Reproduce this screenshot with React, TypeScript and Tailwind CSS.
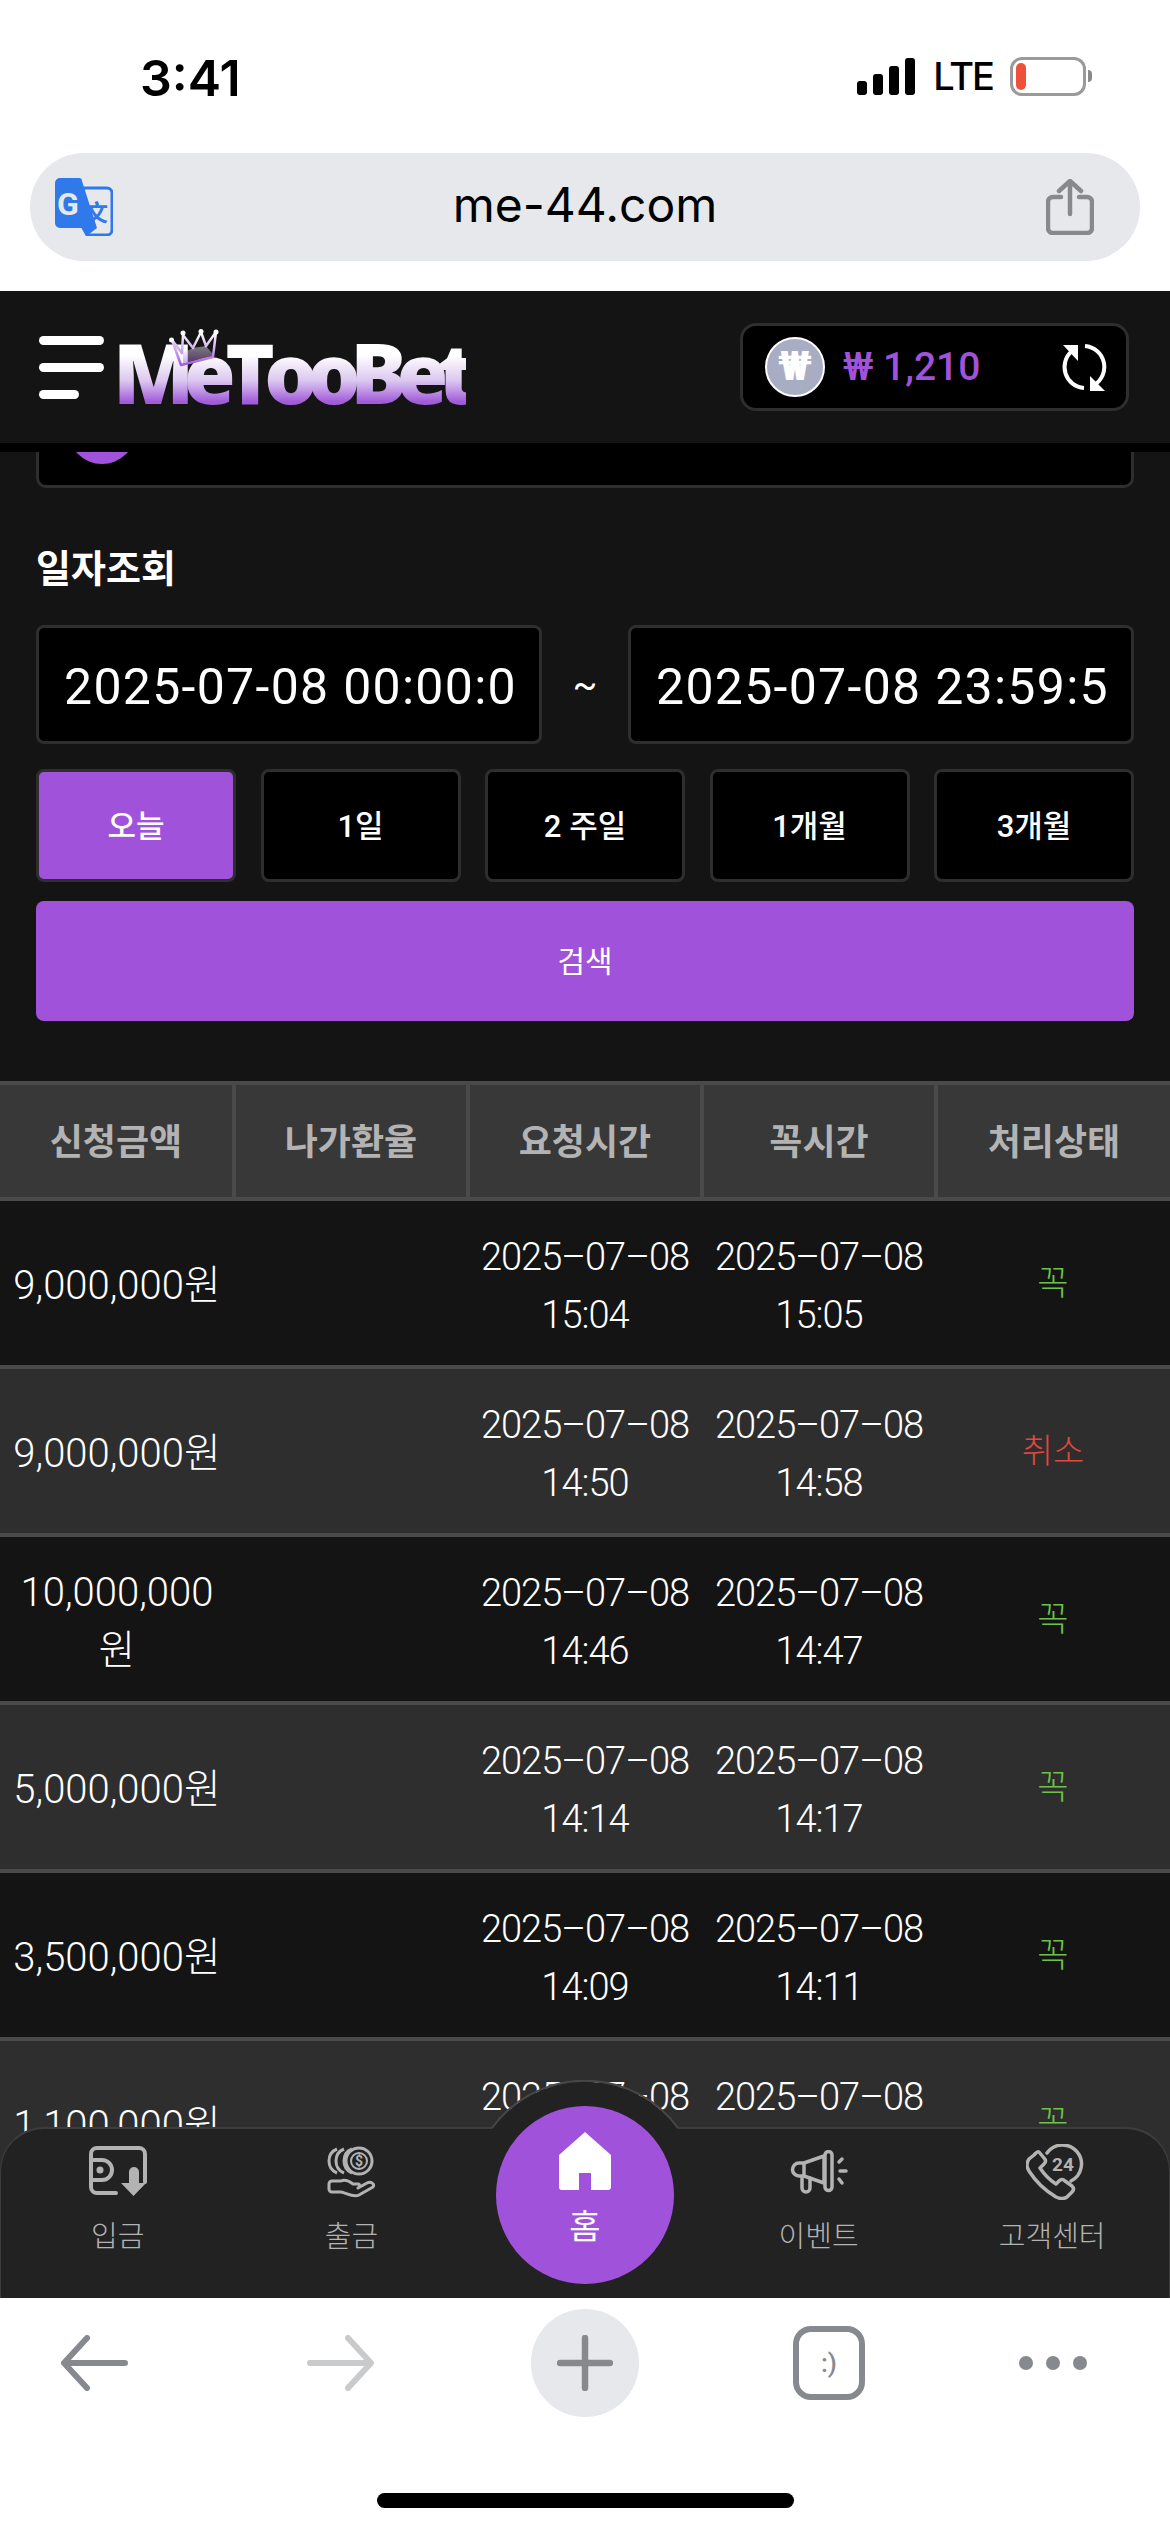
const COLS = 'grid grid-cols-[236px_234px_234px_234px_232px]'

const HEADERS = ['신청금액', '나가환율', '요청시간', '꼭시간', '처리상태']

const ROWS = [
  { amount: '9,000,000원', req: '15:04', done: '15:05', status: '꼭' },
  { amount: '9,000,000원', req: '14:50', done: '14:58', status: '취소' },
  { amount: '10,000,000\n원', req: '14:46', done: '14:47', status: '꼭' },
  { amount: '5,000,000원', req: '14:14', done: '14:17', status: '꼭' },
  { amount: '3,500,000원', req: '14:09', done: '14:11', status: '꼭' },
  { amount: '1,100,000원', req: '14:02', done: '14:03', status: '꼭' },
]

const RANGES = ['오늘', '1일', '2 주일', '1개월', '3개월']

function TranslateIcon() {
  return (
    <svg width="58" height="58" viewBox="0 0 58 58">
      <path d="M28 10 H52 a5 5 0 0 1 5 5 V52 a5 5 0 0 1 -5 5 H32 L27 48 Z" fill="#e7e8ec" stroke="#3079ea" strokeWidth="3" />
      <path d="M5 0 H24 a3 3 0 0 1 3 3 L42 50 H5 a5 5 0 0 1 -5 -5 V5 a5 5 0 0 1 5 -5 Z" fill="#3079ea" />
      <path d="M27 50 H42 L33 57 Z" fill="#3079ea" />
      <text x="2" y="37" fontSize="32" fontWeight="700" fill="#e7e8ec" fontFamily="Roboto">G</text>
      <text x="30" y="43" fontSize="23" fontWeight="700" fill="#3079ea" fontFamily="Noto Sans CJK SC">文</text>
    </svg>
  )
}

function ShareIcon() {
  return (
    <svg width="48" height="56" viewBox="0 0 48 56" fill="none" stroke="#868a8e" strokeWidth="4.5" strokeLinecap="round" strokeLinejoin="round">
      <path d="M15 18 H7 a5 5 0 0 0 -5 5 V49 a5 5 0 0 0 5 5 H41 a5 5 0 0 0 5 -5 V23 a5 5 0 0 0 -5 -5 H33" />
      <path d="M24 35 V3 M13 12 L24 2 L35 12" />
    </svg>
  )
}

function RefreshIcon() {
  return (
    <svg width="47" height="47" viewBox="0 0 47 47" fill="none">
      <path d="M12 7 A21 21 0 0 0 24 44" stroke="#fff" strokeWidth="4" />
      <path d="M25 2 A21 21 0 0 1 34 41" stroke="#fff" strokeWidth="4" />
      <path d="M3 1 H18 V17 Z" fill="#fff" />
      <path d="M30 32 V47 H45 Z" fill="#fff" />
    </svg>
  )
}

function Crown() {
  return (
    <svg width="50" height="38" viewBox="0 0 50 38" className="absolute left-[56px] -top-[1px]">
      <defs>
        <linearGradient id="crown" x1="0" y1="0" x2="0" y2="1">
          <stop offset="0" stopColor="#ffffff" />
          <stop offset="1" stopColor="#a35cd9" />
        </linearGradient>
      </defs>
      <path d="M3 11 L13 24 L14 6 L24 19 L32 3 L37 17 L47 3 L44 28 L12 36 Z" fill="none" stroke="url(#crown)" strokeWidth="2.5" strokeLinejoin="round" />
      <path d="M14 24 L24 19 L37 17 L43 24 L43 27 L14 34 Z" fill="url(#crown)" opacity="0.45" />
      <circle cx="2.5" cy="11" r="2.5" fill="#fff" />
      <circle cx="14" cy="4" r="2.5" fill="#fff" />
      <circle cx="32" cy="2.5" r="2.5" fill="#fff" />
      <circle cx="47" cy="3" r="2.5" fill="#fff" />
    </svg>
  )
}

function WalletIcon() {
  return (
    <svg width="58" height="52" viewBox="0 0 58 52" fill="none" stroke="#b3b3b3" strokeWidth="4" strokeLinecap="round">
      <path d="M27 47 H8 a6 6 0 0 1 -6 -6 V8 a6 6 0 0 1 6 -6 H50 a6 6 0 0 1 6 6 V36" />
      <path d="M2 14 H13 a10 10 0 0 1 0 20 H2" />
      <circle cx="11" cy="24" r="3.5" fill="#b3b3b3" stroke="none" />
      <path d="M40 26 a5 5 0 0 1 10 0 V37 H57 L44.5 50 L32 37 H40 Z" fill="#b3b3b3" stroke="none" />
    </svg>
  )
}

function CoinsIcon() {
  return (
    <svg width="50" height="52" viewBox="0 0 50 52" fill="none" stroke="#b3b3b3" strokeWidth="3">
      <circle cx="33" cy="15" r="13" />
      <path d="M26 3 A13 13 0 0 0 26 27 M18 3 A13 13 0 0 0 18 27 M11 3 A13 13 0 0 0 11 27" />
      <circle cx="33" cy="15" r="8" strokeWidth="2" />
      <text x="33" y="20" textAnchor="middle" fontSize="14" fontWeight="700" fill="#b3b3b3" stroke="none" fontFamily="Roboto">$</text>
      <path d="M6 35 H15 C19 33 23 35 27 38 H32 C34 38 34 41 32 42 L41 37 C45 35 49 38 47 41 L33 49 C27 52 21 47 15 46 H6 a3 3 0 0 1 -3 -3 V38 a3 3 0 0 1 3 -3 Z" strokeLinejoin="round" />
    </svg>
  )
}

function MegaphoneIcon() {
  return (
    <svg width="58" height="44" viewBox="0 0 58 44" fill="none" stroke="#b3b3b3" strokeWidth="3.5" strokeLinecap="round" strokeLinejoin="round">
      <path d="M14 13 L34 6 V33 L14 26 H9 a6.5 6.5 0 0 1 0 -13 Z" />
      <path d="M14 13 V26" />
      <rect x="35" y="1.5" width="7" height="39" rx="3.5" />
      <path d="M12 27 V38 a4 4 0 0 0 8 0 V28" />
      <path d="M49 12 L52 9 M50 21 H56 M49 29 L52 33" />
    </svg>
  )
}

function PhoneIcon() {
  return (
    <svg width="58" height="56" viewBox="0 0 58 56" fill="none" stroke="#b3b3b3" strokeWidth="3.5" strokeLinejoin="round" strokeLinecap="round" className="ml-[5px]">
      <path d="M21 9 A19 19 0 1 1 45 37" />
      <path d="M8 11 L3 15 C0 19 1 24 3 27 C10 38 20 47 30 53 C34 55 38 55 41 53 L46 48 C48 46 48 44 46 42 L39 37 C37 35 35 35 33 37 L30 40 C22 35 18 30 14 24 L18 20 C20 18 20 16 18 14 L13 8 C11 7 10 9 8 11 Z" />
      <text x="37" y="27" textAnchor="middle" fontSize="19" fontWeight="700" fill="#b3b3b3" stroke="none" fontFamily="Roboto">24</text>
    </svg>
  )
}

function HomeIcon() {
  return (
    <svg width="52" height="58" viewBox="0 0 52 58">
      <path d="M26 0 L52 23 V55 a3 3 0 0 1 -3 3 H32 V41 H20 V58 H3 a3 3 0 0 1 -3 -3 V23 Z" fill="#fff" />
    </svg>
  )
}

function NavItem({ label, children }: { label: string; children: React.ReactNode }) {
  return (
    <div className="flex flex-col items-center">
      <div className="h-[56px] flex items-center">{children}</div>
      <span className="mt-[17px] text-[29px] leading-[40px] font-light text-[#b3b3b3]">{label}</span>
    </div>
  )
}

function BottomNav() {
  return (
    <div className="absolute left-0 right-0 bottom-0 h-[171px]">
      {/* bump behind the home button */}
      <svg width="190" height="50" viewBox="0 0 190 50" className="absolute left-[490px] -top-[47px]">
        <path d="M2 49 A115 115 0 0 1 188 49 Z" fill="#222222" />
        <path d="M2 48 A115 115 0 0 1 188 48" fill="none" stroke="#474747" strokeWidth="2" />
      </svg>
      <div className="h-full rounded-t-[44px] bg-[#222222] border-t-2 border-x border-t-[#3d3d3d] border-x-[#3d3d3d] grid grid-cols-5 pt-[15px]">
        <NavItem label="입금"><WalletIcon /></NavItem>
        <NavItem label="출금"><CoinsIcon /></NavItem>
        <div />
        <NavItem label="이벤트"><MegaphoneIcon /></NavItem>
        <NavItem label="고객센터"><PhoneIcon /></NavItem>
      </div>
      <div className="absolute left-[496px] -top-[21px] w-[178px] h-[178px] rounded-full bg-[#a152da] flex flex-col items-center pt-[26px]">
        <HomeIcon />
        <span className="mt-[17px] text-[34px] leading-[40px] text-white">홈</span>
      </div>
    </div>
  )
}

function BrowserToolbar() {
  return (
    <div className="h-[234px] bg-white flex flex-col">
      <div className="flex items-center h-[119px] pt-[11px] pl-[41px]">
        <div className="w-[108px] flex justify-center">
          <svg width="68" height="56" viewBox="0 0 68 56" fill="none" stroke="#868a8e" strokeWidth="6" strokeLinecap="round" strokeLinejoin="round">
            <path d="M64 28 H4 M26 3 L3 28 L26 53" />
          </svg>
        </div>
        <div className="ml-[137px] w-[108px] flex justify-center">
          <svg width="68" height="56" viewBox="0 0 68 56" fill="none" stroke="#c9cacc" strokeWidth="6" strokeLinecap="round" strokeLinejoin="round">
            <path d="M4 28 H64 M42 3 L65 28 L42 53" />
          </svg>
        </div>
        <div className="ml-[137px] w-[108px] h-[108px] rounded-full bg-[#e7e8ec] flex items-center justify-center">
          <svg width="56" height="56" viewBox="0 0 56 56" fill="none" stroke="#868a8e" strokeWidth="6.5" strokeLinecap="round">
            <path d="M28 3 V53 M3 28 H53" />
          </svg>
        </div>
        <div className="ml-[154px] w-[72px] h-[74px] rounded-[18px] border-[6px] border-[#868a8e] flex items-center justify-center">
          <span className="text-[26px] leading-none font-medium text-[#868a8e]">:)</span>
        </div>
        <div className="ml-[154px] flex gap-[13px]">
          <span className="w-[14px] h-[14px] rounded-full bg-[#868a8e]" />
          <span className="w-[14px] h-[14px] rounded-full bg-[#868a8e]" />
          <span className="w-[14px] h-[14px] rounded-full bg-[#868a8e]" />
        </div>
      </div>
      <div className="mt-[76px] mx-auto w-[417px] h-[15px] rounded-full bg-black" />
    </div>
  )
}

export default function App() {
  return (
    <div className="w-[1170px] h-[2532px] overflow-hidden flex flex-col bg-white font-['Roboto','Noto_Sans_CJK_KR',sans-serif]">
      {/* status bar */}
      <div className="h-[153px] flex items-start pt-[52px]">
        <span className="ml-[140px] font-['Inter'] text-[50px] leading-[52px] font-semibold text-black">3:41</span>
        <div className="ml-auto mr-[78px] flex items-center h-[40px] mt-[4px]">
          <div className="flex items-end gap-[6px] h-[38px]">
            <span className="w-[10px] h-[14px] rounded-[3px] bg-black" />
            <span className="w-[10px] h-[21px] rounded-[3px] bg-black" />
            <span className="w-[10px] h-[29px] rounded-[3px] bg-black" />
            <span className="w-[10px] h-[37px] rounded-[3px] bg-black" />
          </div>
          <span className="ml-[18px] font-['Inter'] text-[38px] leading-[40px] font-medium tracking-[-2px] text-black">LTE</span>
          <div className="ml-[17px] w-[76px] h-[39px] rounded-[12px] border-[3px] border-[#9a9a9a] p-[3px]">
            <div className="w-[10px] h-full rounded-[5px] bg-[#ef5039]" />
          </div>
          <span className="ml-[2px] w-[4px] h-[12px] rounded-r-full bg-[#8a8a8a]" />
        </div>
      </div>

      {/* address bar */}
      <div className="h-[138px]">
        <div className="mx-[30px] h-[108px] rounded-full bg-[#e7e8ec] flex items-center pl-[25px] pr-[46px]">
          <TranslateIcon />
          <span className="flex-1 text-center font-['Inter'] text-[48px] leading-[56px] text-black ml-[11px] -mt-[5px]">me-44.com</span>
          <ShareIcon />
        </div>
      </div>

      {/* web view */}
      <div className="relative flex-1 overflow-hidden bg-[#141414]">
        <header className="h-[161px] border-b-[9px] border-black flex items-start pl-[39px] pr-[41px]">
          <div className="mt-[45px] w-[65px] flex flex-col gap-[18px]">
            <span className="h-[9px] rounded-full bg-white" />
            <span className="h-[9px] rounded-full bg-white" />
            <span className="h-[9px] w-[40px] rounded-full bg-white" />
          </div>
          <div className="relative ml-[9px] mt-[39px]">
            <Crown />
            <span className="block font-['Open_Sans'] text-[84px] leading-[84px] font-extrabold tracking-[-10.5px] bg-linear-to-b from-white from-30% via-[#dcc8f0] via-60% to-[#a35cd9] to-85% bg-clip-text text-transparent">MeTooBet</span>
          </div>
          <div className="ml-auto mt-[32px] w-[389px] h-[88px] rounded-[16px] border-[3px] border-[#2e2e2e] bg-black flex items-center pl-[22px] pr-[19px]">
            <div className="w-[60px] h-[60px] rounded-full bg-[#a9adc4] border-2 border-white flex items-center justify-center text-[40px] font-black text-white">₩</div>
            <span className="ml-[18px] text-[39px] leading-none font-medium text-[#a152da]">₩ 1,210</span>
            <div className="ml-auto flex"><RefreshIcon /></div>
          </div>
        </header>

        <main className="px-[36px]">
          <div className="h-[36px] overflow-hidden bg-black border-x-[3px] border-b-[3px] border-[#2e2e2e] rounded-b-[10px] pl-[29px]">
            <div className="-mt-[56px] w-[68px] h-[68px] rounded-full bg-[#a152da]" />
          </div>

          <h2 className="mt-[54px] h-[50px] text-[38px] leading-[50px] pt-[2px] font-semibold text-white">일자조회</h2>

          <div className="mt-[33px] flex items-center">
            <input readOnly value="2025-07-08 00:00:00" className="w-[506px] h-[119px] rounded-[8px] border-[3px] border-[#2e2e2e] bg-black pl-[25px] pr-[20px] pt-[5px] text-[50px] tracking-[1.3px] text-white outline-none" />
            <span className="w-[86px] text-center text-[36px] text-white">~</span>
            <input readOnly value="2025-07-08 23:59:59" className="w-[506px] h-[119px] rounded-[8px] border-[3px] border-[#2e2e2e] bg-black pl-[25px] pr-[20px] pt-[5px] text-[50px] tracking-[1.3px] text-white outline-none" />
          </div>

          <div className="mt-[25px] flex justify-between">
            {RANGES.map((label, i) => (
              <button
                key={label}
                className={
                  i === 0
                    ? 'w-[200px] h-[113px] rounded-[8px] border-[3px] border-[#2e2e2e] bg-[#a152da] pt-[4px] text-[31px] font-medium text-white'
                    : 'w-[200px] h-[113px] rounded-[8px] border-[3px] border-[#2e2e2e] bg-black pt-[4px] text-[31px] font-medium text-white'
                }
              >
                {label}
              </button>
            ))}
          </div>

          <button className="mt-[19px] w-full h-[120px] rounded-[8px] bg-[#a152da] text-[30px] text-white">검색</button>
        </main>

        {/* history table */}
        <div className="mt-[60px]">
          <div className={`${COLS} h-[120px] bg-[#383838] border-y-4 border-[#4a4a4a]`}>
            {HEADERS.map((h, i) => (
              <div
                key={h}
                className={
                  i < 4
                    ? 'border-r-4 border-[#4a4a4a] flex items-center justify-center pt-[3px] text-[36px] font-semibold text-[#b3b3b3]'
                    : 'flex items-center justify-center pt-[3px] text-[36px] font-semibold text-[#b3b3b3]'
                }
              >
                {h}
              </div>
            ))}
          </div>
          {ROWS.map((row, i) => (
            <div
              key={i}
              className={
                i % 2 === 0
                  ? 'grid grid-cols-5 h-[168px] pt-[6px] bg-[#141414] border-b-4 border-[#4a4a4a] text-center text-[38px] leading-[58px] font-light tracking-[-1px] text-white'
                  : 'grid grid-cols-5 h-[168px] pt-[6px] bg-[#2e2e2e] border-b-4 border-[#4a4a4a] text-center text-[38px] leading-[58px] font-light tracking-[-1px] text-white'
              }
            >
              <div className="flex items-center justify-center whitespace-pre-line text-[40px] tracking-normal">{row.amount}</div>
              <div />
              <div className="flex flex-col justify-center">
                <span>2025–07–08</span>
                <span>{row.req}</span>
              </div>
              <div className="flex flex-col justify-center">
                <span>2025–07–08</span>
                <span>{row.done}</span>
              </div>
              <div
                className={
                  row.status === '취소'
                    ? '-mt-[6px] flex items-center justify-center text-[34px] tracking-normal text-[#e0483e]'
                    : '-mt-[6px] flex items-center justify-center text-[34px] tracking-normal text-[#6cc24a]'
                }
              >
                {row.status}
              </div>
            </div>
          ))}
        </div>

        <BottomNav />
      </div>

      <BrowserToolbar />
    </div>
  )
}
